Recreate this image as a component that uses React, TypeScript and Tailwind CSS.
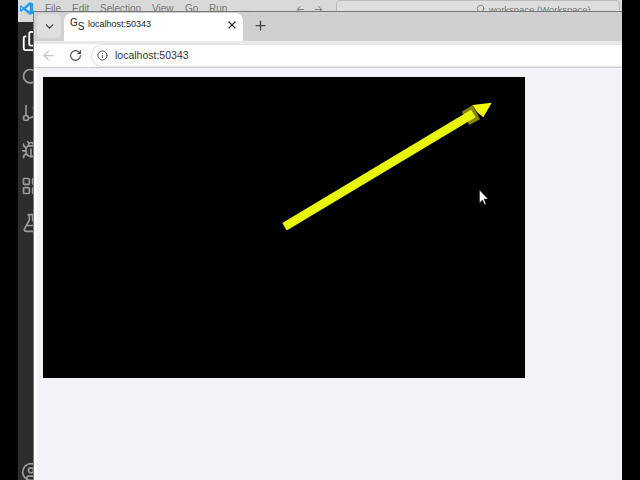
import { ArrowLeft, ArrowRight, Bug, ChevronDown, CircleUser, Files, FlaskConical, GitBranch, Info, LayoutGrid, Plus, RotateCw, Search, X } from "lucide-react";

const menus = [
  { label: "File", width: "w-[27px]" },
  { label: "Edit", width: "w-[28px]" },
  { label: "Selection", width: "w-[52px]" },
  { label: "View", width: "w-[33px]" },
  { label: "Go", width: "w-[24px]" },
  { label: "Run", width: "w-[33px]" },
  { label: "...", width: "w-[20px]" },
];

function VscodeLogo() {
  return (
    <svg viewBox="0 0 16 16" className="h-[15px] w-[15px]">
      <path d="M11.5 1 15 2.6v10.8L11.5 15 5 9.2 2.2 11.4 1 10.7V5.3l1.2-.7L5 6.8z" fill="#1f9cf0" />
      <path d="M11.5 4.8 7.3 8l4.2 3.2z" fill="#e8e8e8" />
      <path d="M2.2 6.4v3.2L3.8 8z" fill="#e8e8e8" />
    </svg>
  );
}

function Page() {
  return (
    <div className="flex-1 border-l-[3px] border-white bg-[#f3f2f7] pl-[6px] pt-[9px]">
      <svg viewBox="0 0 482 301" className="block h-[301px] w-[482px] bg-black">
        {/* coordinates are relative to the canvas corner */}
        <polygon points="429.7,28 418.7,34.7 426.3,48 437,42.3" fill="#85850c" />
        <polygon points="239.3,146 243.7,153.4 432.5,40.2 428.1,32.8" fill="#e8f50c" />
        <polygon points="429.7,28 448.7,25.7 440.3,40.3 434,35" fill="#f4f70e" />
        <polygon points="436.5,113 436.5,126 439.5,123 441.5,127.5 443,127 441,122 445,122" fill="#ffffff" stroke="#222222" strokeWidth="0.5" />
      </svg>
    </div>
  );
}

function Browser() {
  return (
    <div className="absolute inset-y-0 right-0 left-[15px] top-[11px] flex flex-col border-t border-l border-[#777777] bg-white">
      <div className="flex h-[29px] items-end bg-[#d0cfd1] pl-[3px]">
        <div className="mb-[3px] flex h-[24px] w-[24px] items-center justify-center rounded-[5px] bg-[#dededf] text-[#333333]">
          <ChevronDown size={13} />
        </div>
        <div className="ml-[3px] flex h-[28px] w-[179px] items-center rounded-t-[8px] bg-white pb-[4px] pl-[6px] pr-[5px]">
          <span className="flex w-[18px] items-start text-[10px] leading-none text-[#222222]">
            <span>G</span>
            <span className="mt-[4px]">S</span>
          </span>
          <span className="text-[9px] text-[#222222]">localhost:50343</span>
          <X size={12} className="ml-auto text-[#222222]" strokeWidth={2.2} />
        </div>
        <div className="mb-[4px] ml-[10px] flex h-[24px] items-center text-[#444444]">
          <Plus size={15} />
        </div>
      </div>
      <div className="flex h-[27px] items-center border-t-[3px] border-b border-t-[#e9e9eb] border-b-[#cfcfd2] bg-white pl-[7px]">
        <ArrowLeft size={15} className="text-[#c4c4c6]" />
        <RotateCw size={13} className="ml-[13px] text-[#444444]" />
        <div className="ml-[9px] flex h-[23px] flex-1 items-center rounded-l-full border border-r-0 border-[#e4e4e6] pl-[5px] text-[10.5px] text-[#333333]">
          <Info size={11} className="mr-[7px] text-[#444444]" />
          localhost:50343
        </div>
      </div>
      <Page />
    </div>
  );
}

export default function App() {
  return (
    <div className="flex h-[480px] w-[640px] bg-black px-[18px] font-['Liberation_Sans',sans-serif]">
      <div className="relative flex flex-1 flex-col overflow-hidden bg-[#f3f2f7]">
        <div className="flex h-[22px] items-start bg-[#d9d9d9] text-[10px] text-[#777777]">
          <div className="ml-[1px] mt-[1px] w-[26px]">
            <VscodeLogo />
          </div>
          {menus.map((m) => (
            <span key={m.label} className={`${m.width} leading-[18px]`}>{m.label}</span>
          ))}
          <ArrowLeft size={11} className="ml-[33px] mt-[4px]" />
          <ArrowRight size={11} className="ml-[7px] mt-[4px]" />
          <div className="ml-[12px] flex h-[20px] w-[284px] rounded-[4px] border border-[#bdbdbd] bg-[#dedede] pl-[139px] text-[9.5px] leading-[17px]">
            <Search size={10} className="mr-[3px] mt-[3px]" />
            workspace (Workspace)
          </div>
        </div>
        <div className="flex w-[15px] flex-1 flex-col items-start overflow-hidden bg-[#2d2d2d] pt-[8px] text-[#9a9a9a]">
          <Files size={22} className="ml-[3px] shrink-0 text-white" />
          <Search size={20} className="ml-[3px] mt-[15px] shrink-0" />
          <GitBranch size={20} className="ml-[3px] mt-[16px] shrink-0" />
          <Bug size={20} className="ml-[3px] mt-[17px] shrink-0" />
          <LayoutGrid size={20} className="ml-[3px] mt-[16px] shrink-0" />
          <FlaskConical size={20} className="ml-[3px] mt-[17px] shrink-0" />
          <CircleUser size={20} className="ml-[3px] mt-auto mb-[-2px] shrink-0" />
        </div>
        <Browser />
      </div>
    </div>
  );
}
